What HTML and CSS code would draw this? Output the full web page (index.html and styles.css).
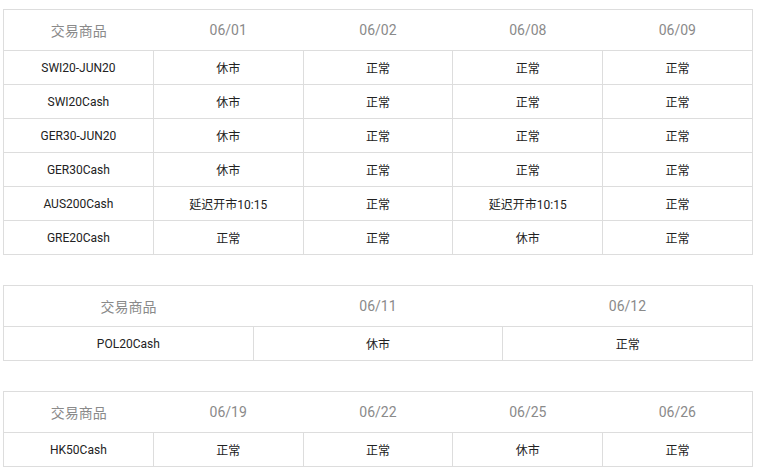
FILE: index.html
```html
<!DOCTYPE html>
<html lang="zh">
<head>
<meta charset="utf-8">
<title>交易时间</title>
<link rel="stylesheet" href="styles.css">
</head>
<body>
<div class="page">
  <table class="sched">
    <thead>
      <tr><th>交易商品</th><th>06/01</th><th>06/02</th><th>06/08</th><th>06/09</th></tr>
    </thead>
    <tbody>
      <tr><td>SWI20-JUN20</td><td>休市</td><td>正常</td><td>正常</td><td>正常</td></tr>
      <tr><td>SWI20Cash</td><td>休市</td><td>正常</td><td>正常</td><td>正常</td></tr>
      <tr><td>GER30-JUN20</td><td>休市</td><td>正常</td><td>正常</td><td>正常</td></tr>
      <tr><td>GER30Cash</td><td>休市</td><td>正常</td><td>正常</td><td>正常</td></tr>
      <tr><td>AUS200Cash</td><td>延迟开市10:15</td><td>正常</td><td>延迟开市10:15</td><td>正常</td></tr>
      <tr><td>GRE20Cash</td><td>正常</td><td>正常</td><td>休市</td><td>正常</td></tr>
    </tbody>
  </table>
  <table class="sched">
    <thead>
      <tr><th>交易商品</th><th>06/11</th><th>06/12</th></tr>
    </thead>
    <tbody>
      <tr><td>POL20Cash</td><td>休市</td><td>正常</td></tr>
    </tbody>
  </table>
  <table class="sched">
    <thead>
      <tr><th>交易商品</th><th>06/19</th><th>06/22</th><th>06/25</th><th>06/26</th></tr>
    </thead>
    <tbody>
      <tr><td>HK50Cash</td><td>正常</td><td>正常</td><td>休市</td><td>正常</td></tr>
    </tbody>
  </table>
</div>
</body>
</html>
```
FILE: styles.css
```css
html, body {
  margin: 0;
  padding: 0;
  background: #fff;
}
.page {
  padding: 9px 0 0 3px;
  display: flex;
  flex-direction: column;
  gap: 30px;
  font-family: Roboto, "Noto Sans CJK SC", sans-serif;
}
.sched {
  width: 750px;
  border-collapse: collapse;
  table-layout: fixed;
  border: 1px solid #ddd;
}
.sched th {
  height: 40px;
  padding: 0;
  font-size: 14px;
  font-weight: normal;
  color: #8a8a8a;
  text-align: center;
  vertical-align: middle;
  border: none;
  border-bottom: 1px solid #ddd;
}
.sched td {
  height: 33px;
  padding: 0;
  font-size: 12px;
  color: #222;
  text-align: center;
  vertical-align: middle;
  border: 1px solid #ddd;
}
```
